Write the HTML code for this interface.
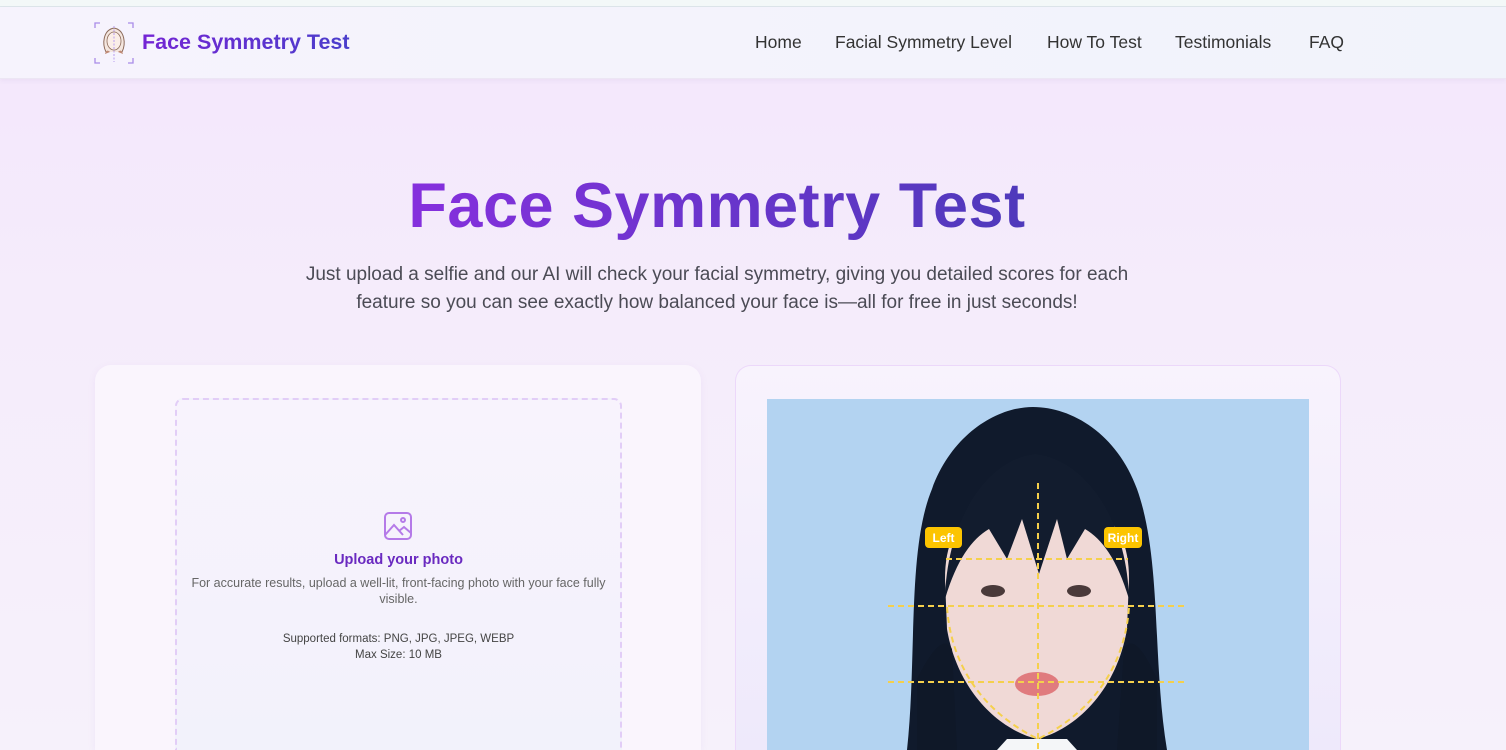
<!DOCTYPE html>
<html><head><meta charset="utf-8"><style>
*{margin:0;padding:0;box-sizing:border-box}
html{width:1506px;height:750px;overflow:hidden}
body{width:1506px;height:750px;overflow:hidden;font-family:"Liberation Sans",sans-serif;background:linear-gradient(180deg,#f3e6fc 0%,#f5ecfb 40%,#f6f1fb 100%);position:relative}
.top{position:absolute;left:0;top:0;width:1506px;height:7px;background:#f3f8f8;border-bottom:1px solid #dde6ea}
.nav{position:absolute;left:0;top:7px;width:1506px;height:72px;background:linear-gradient(90deg,#f6f3fd,#f1f3fb);border-bottom:1px solid #ece6f4;box-shadow:0 2px 4px rgba(120,80,160,.06)}
.logo{position:absolute;left:142px;top:23px;font-size:21.5px;font-weight:bold;background:linear-gradient(90deg,#7424d4,#4a3ecb);-webkit-background-clip:text;color:transparent}
.links{position:absolute;top:25px;left:0;font-size:17.5px;color:#333}
.links span{position:absolute;white-space:nowrap}
h1{position:absolute;left:0;width:1434px;text-align:center;top:170px;font-size:63px;font-weight:bold;background:linear-gradient(90deg,#8a2fe0 25%,#4a3ab8 75%);-webkit-background-clip:text;color:transparent;letter-spacing:.5px}
.sub{position:absolute;left:267px;width:900px;top:261px;text-align:center;font-size:19px;line-height:28px;color:#4b4b55;padding:0 22px}
.card1{position:absolute;left:95px;top:365px;width:606px;height:385px;background:#faf5fd;border-radius:16px 16px 0 0;box-shadow:0 2px 8px rgba(150,100,200,.08)}
.dash{position:absolute;left:175px;top:398px;width:447px;height:352px;border:2px dashed #e2cdf7;border-bottom:none;border-radius:8px 8px 0 0;background:linear-gradient(180deg,#f8f3fd,#f2f2fb)}
.card2{position:absolute;left:735px;top:365px;width:606px;height:385px;background:linear-gradient(180deg,#f8f3fd,#eee9fb);border:1px solid #ecd8fa;border-bottom:none;border-radius:16px 16px 0 0}
.t{position:absolute;text-align:center;width:447px;left:175px}
</style></head><body>
<div class="top"></div>
<div class="nav">
<svg style="position:absolute;left:94px;top:15px" width="40" height="42" viewBox="0 0 40 42">
<g stroke="#a98be8" stroke-width="1.3" fill="none"><path d="M1 6V1H6M34 1H39V6M1 36V41H6M34 41H39V36"/></g>
<path d="M12 30C8 22 9 8 20 6C31 8 32 22 28 30" fill="#f4e6df" stroke="#8c6a5a" stroke-width="1"/>
<ellipse cx="20" cy="19" rx="7" ry="9" fill="#fbeee8" stroke="#8c6a5a" stroke-width=".8"/>
<path d="M11 32C12 28 14 28 16 30M29 32C28 28 26 28 24 30" fill="#c08a75"/>
<line x1="20" y1="4" x2="20" y2="40" stroke="#b89ef0" stroke-width="1" stroke-dasharray="2 1.5"/>
</svg>
<div class="logo">Face Symmetry Test</div>
<div class="links"><span style="left:755px">Home</span><span style="left:835px">Facial Symmetry Level</span><span style="left:1047px">How To Test</span><span style="left:1175px">Testimonials</span><span style="left:1309px">FAQ</span></div>
</div>
<h1>Face Symmetry Test</h1>
<div class="sub">Just upload a selfie and our AI will check your facial symmetry, giving you detailed scores for each<br>feature so you can see exactly how balanced your face is—all for free in just seconds!</div>
<div class="card1"></div>
<div class="dash"></div>
<svg style="position:absolute;left:383px;top:511px" width="30" height="30" viewBox="0 0 30 30" fill="none" stroke="#b57ae8" stroke-width="2"><rect x="2" y="2" width="26" height="26" rx="4"/><circle cx="20" cy="9" r="2"/><path d="M2 24L11 14L20 24M16 20L21 16L28 22"/></svg>
<div class="t" style="top:552px;font-size:14.5px;font-weight:bold;color:#6a2ac0">Upload your photo</div>
<div class="t" style="top:575px;font-size:12.5px;line-height:16px;color:#666;padding:0 8px">For accurate results, upload a well-lit, front-facing photo with your face fully visible.</div>
<div class="t" style="top:631px;font-size:11.5px;line-height:16px;color:#444">Supported formats: PNG, JPG, JPEG, WEBP<br>Max Size: 10 MB</div>
<div class="card2"></div>
<svg style="position:absolute;left:767px;top:399px" width="542" height="351" viewBox="0 0 542 351">
<rect width="542" height="351" fill="#b3d3f1"/>
<path d="M140 351C150 260 140 150 165 90C185 35 230 8 266 8C305 8 350 35 370 90C395 160 385 260 400 351Z" fill="#101a2c"/>
<path d="M178 180C178 130 200 100 270 100C340 100 362 130 362 180L360 230C350 290 310 330 270 340C230 330 190 290 180 230Z" fill="#f0d9d6"/>
<path d="M178 200C180 120 220 60 268 55C318 60 360 120 362 200C350 160 335 140 318 130L300 160L290 120L272 175L255 120L240 160L222 130C205 140 190 160 178 200Z" fill="#121c2e"/>
<path d="M150 280C170 240 180 240 185 250L190 351H150ZM390 280C372 240 362 240 357 250L350 351H390Z" fill="#0f1828"/>
<ellipse cx="226" cy="192" rx="12" ry="6" fill="#4a3a3a"/><ellipse cx="312" cy="192" rx="12" ry="6" fill="#4a3a3a"/>
<ellipse cx="270" cy="285" rx="22" ry="12" fill="#e07b7e"/>
<path d="M230 351L240 340H300L310 351Z" fill="#f4f6f8"/>
<g stroke="#f5d04c" stroke-width="2" stroke-dasharray="6 4" fill="none">
<line x1="271" y1="84" x2="271" y2="351"/>
<line x1="179" y1="160" x2="361" y2="160"/>
<line x1="121" y1="207" x2="421" y2="207"/>
<line x1="121" y1="283" x2="421" y2="283"/>
<path d="M180 208C185 280 230 320 271 340C312 320 357 280 362 208"/>
</g>
<rect x="158" y="128" width="37" height="21" rx="4" fill="#fcc400"/>
<text x="176.5" y="143" font-size="12" font-weight="bold" fill="#fff" text-anchor="middle" font-family="Liberation Sans">Left</text>
<rect x="337" y="128" width="38" height="21" rx="4" fill="#fcc400"/>
<text x="356" y="143" font-size="12" font-weight="bold" fill="#fff" text-anchor="middle" font-family="Liberation Sans">Right</text>
</svg>
</body></html>
